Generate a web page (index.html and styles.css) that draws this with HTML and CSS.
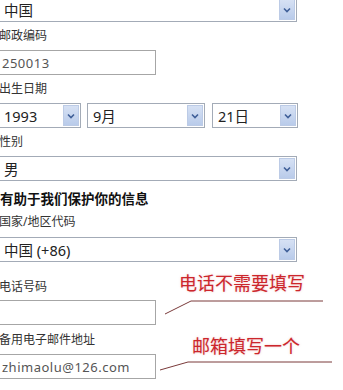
FILE: index.html
```html
<!DOCTYPE html>
<html lang="zh-CN">
<head>
    <meta charset="UTF-8">
    <meta name="viewport" content="width=device-width, initial-scale=1.0">
    <title>注册信息</title>
    <link rel="stylesheet" href="styles.css">
</head>
<body>
    <div class="form">
        <div class="select full"><span class="value">中国</span><span class="arrow"><svg width="8" height="6" viewBox="0 0 8 6"><path d="M1 1.5 L4 4.5 L7 1.5" fill="none" stroke="#3f5f98" stroke-width="1.6"/></svg></span></div>

        <div class="label">邮政编码</div>
        <div class="input"><span class="blur">250013</span></div>

        <div class="label">出生日期</div>
        <div class="dates">
            <div class="select year"><span class="value">1993</span><span class="arrow"><svg width="8" height="6" viewBox="0 0 8 6"><path d="M1 1.5 L4 4.5 L7 1.5" fill="none" stroke="#3f5f98" stroke-width="1.6"/></svg></span></div>
            <div class="select month"><span class="value">9月</span><span class="arrow"><svg width="8" height="6" viewBox="0 0 8 6"><path d="M1 1.5 L4 4.5 L7 1.5" fill="none" stroke="#3f5f98" stroke-width="1.6"/></svg></span></div>
            <div class="select day"><span class="value">21日</span><span class="arrow"><svg width="8" height="6" viewBox="0 0 8 6"><path d="M1 1.5 L4 4.5 L7 1.5" fill="none" stroke="#3f5f98" stroke-width="1.6"/></svg></span></div>
        </div>

        <div class="label">性别</div>
        <div class="select full"><span class="value">男</span><span class="arrow"><svg width="8" height="6" viewBox="0 0 8 6"><path d="M1 1.5 L4 4.5 L7 1.5" fill="none" stroke="#3f5f98" stroke-width="1.6"/></svg></span></div>

        <div class="heading">有助于我们保护你的信息</div>
        <div class="label first">国家/地区代码</div>
        <div class="select full"><span class="value">中国 (+86)</span><span class="arrow"><svg width="8" height="6" viewBox="0 0 8 6"><path d="M1 1.5 L4 4.5 L7 1.5" fill="none" stroke="#3f5f98" stroke-width="1.6"/></svg></span></div>

        <div class="label phone">电话号码</div>
        <div class="input"></div>

        <div class="label mail">备用电子邮件地址</div>
        <div class="input"><span class="blur">zhimaolu@126.com</span></div>

        <!-- 标注 -->
        <div class="note note-phone">电话不需要填写</div>
        <div class="note note-mail">邮箱填写一个</div>
        <svg class="lines" width="343" height="390" viewBox="0 0 343 390">
            <path d="M165 314 L191 301 L323 301" fill="none" stroke="#7a3a3a" stroke-width="1"/>
            <path d="M160 370 L188 362 L332 362" fill="none" stroke="#7a3a3a" stroke-width="1"/>
        </svg>
    </div>
</body>
</html>
```

FILE: styles.css
```css
body {
    margin: 0;
    background: #fff;
    overflow: hidden;
    font-family: "Noto Sans", "Noto Sans CJK SC", sans-serif;
}

.form {
    position: relative;
    margin: -3px 0 0 -2px;
    display: flex;
    flex-direction: column;
    align-items: flex-start;
}

.label {
    font-size: 12px;
    line-height: 18px;
    color: #333;
    padding: 5px 0 5px 1px;
}
.label.first {
    padding: 4px 0 6px 1px;
}
.label.phone {
    padding: 16px 0 4px 1px;
}
.label.mail {
    padding: 6px 0 5px 1px;
}

.heading {
    margin-top: 8px;
    padding-left: 2px;
    font-size: 13.5px;
    line-height: 20px;
    font-weight: bold;
    color: #111;
}

.select {
    box-sizing: border-box;
    height: 25px;
    border: 1px solid #a3abb7;
    display: flex;
    align-items: center;
    justify-content: space-between;
    padding: 0 1px 0 5px;
    background: #fff;
}
.select.full {
    width: 299px;
}
.select .value {
    font-size: 14.5px;
    color: #222;
}
.select .arrow {
    box-sizing: border-box;
    width: 16px;
    height: 21px;
    border: 1px solid #bccbe6;
    background: linear-gradient(#d6e1f4, #b9cbea);
    display: flex;
    align-items: center;
    justify-content: center;
}

.dates {
    display: flex;
    gap: 6px;
}
.select.year {
    width: 83px;
}
.select.month {
    width: 118px;
}
.select.day {
    width: 86px;
    margin-left: 1px;
}

.input {
    box-sizing: border-box;
    width: 158px;
    height: 25px;
    border: 1px solid #a6a6a6;
    padding-left: 3px;
    display: flex;
    align-items: center;
}
.blur {
    font-size: 13px;
    color: #555;
    letter-spacing: 0.5px;
}

.note {
    position: absolute;
    font-size: 18px;
    line-height: 20px;
    color: #cc262c;
    text-shadow: 0 0 2px rgba(220, 120, 120, 0.5);
}
.note-phone {
    left: 181px;
    top: 276px;
}
.note-mail {
    left: 194px;
    top: 339px;
}

.lines {
    position: absolute;
    left: 2px;
    top: 3px;
    pointer-events: none;
}
```
